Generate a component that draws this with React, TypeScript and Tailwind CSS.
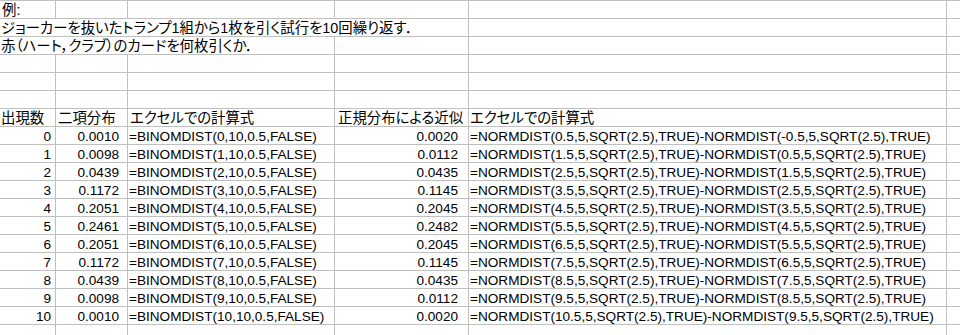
import React from "react";

const binom = ["0.0010", "0.0098", "0.0439", "0.1172", "0.2051", "0.2461", "0.2051", "0.1172", "0.0439", "0.0098", "0.0010"];
const normal = ["0.0020", "0.0112", "0.0435", "0.1145", "0.2045", "0.2482", "0.2045", "0.1145", "0.0435", "0.0112", "0.0020"];

const line = "border-[#c0c0c0]";

function Row({ children }: { children: React.ReactNode }) {
  return <div className={`flex h-[18px] border-b ${line}`}>{children}</div>;
}

function Tail() {
  return <div className="h-full flex-1 border-l border-[#c0c0c0]" />;
}

function Ja({ children }: { children: React.ReactNode }) {
  return <span className="text-[14.4px]">{children}</span>;
}

function Blank() {
  return (
    <Row>
      <div className={`w-[56px] h-full border-r ${line}`} />
      <div className={`w-[72px] h-full border-r ${line}`} />
      <div className={`w-[207px] h-full border-r ${line}`} />
      <div className={`w-[134px] h-full border-r ${line}`} />
      <div className="w-[477px] h-full" />
      <Tail />
    </Row>
  );
}

export default function App() {
  return (
    <div
      className={`w-[960px] h-[335px] overflow-hidden bg-white text-black text-[13.6px] leading-[15px] border-t ${line} [font-family:'Liberation_Sans','Noto_Sans_CJK_JP',sans-serif] [font-feature-settings:'palt']`}
    >
      {/* 例 */}
      <Row>
        <div className={`w-[56px] h-full border-r ${line} pl-[2px] flex items-end`}><Ja>例:</Ja></div>
        <div className={`w-[72px] h-full border-r ${line}`} />
        <div className={`w-[207px] h-full border-r ${line}`} />
        <div className={`w-[134px] h-full border-r ${line}`} />
        <div className="w-[477px] h-full" />
        <Tail />
      </Row>
      <Row>
        <div className={`w-[469px] h-full border-r ${line} pl-[1px] flex items-end whitespace-nowrap`}>
          <Ja>ジョーカーを抜いたトランプ1組から1枚を引く試行を10回繰り返す．</Ja>
        </div>
        <div className="w-[477px] h-full" />
        <Tail />
      </Row>
      <Row>
        <div className={`w-[335px] h-full border-r ${line} pl-[1px] flex items-end whitespace-nowrap`}>
          <Ja>赤（ハート，クラブ）のカードを何枚引くか．</Ja>
        </div>
        <div className={`w-[134px] h-full border-r ${line}`} />
        <div className="w-[477px] h-full" />
        <Tail />
      </Row>
      <Blank />
      <Blank />
      <Blank />

      {/* header */}
      <Row>
        <div className={`w-[56px] h-full border-r ${line} pl-[1px] flex items-end whitespace-nowrap`}><Ja>出現数</Ja></div>
        <div className={`w-[72px] h-full border-r ${line} pl-[2px] flex items-end whitespace-nowrap`}><Ja>二項分布</Ja></div>
        <div className={`w-[207px] h-full border-r ${line} pl-[2px] flex items-end whitespace-nowrap`}><Ja>エクセルでの計算式</Ja></div>
        <div className={`w-[134px] h-full border-r ${line} pl-[3px] flex items-end whitespace-nowrap`}><Ja>正規分布による近似</Ja></div>
        <div className="w-[477px] h-full pl-[1px] flex items-end whitespace-nowrap"><Ja>エクセルでの計算式</Ja></div>
        <Tail />
      </Row>

      {binom.map((b, k) => (
        <Row key={k}>
          <div className={`w-[56px] h-full border-r ${line} pr-[4px] flex items-end justify-end`}>{k}</div>
          <div className={`w-[72px] h-full border-r ${line} pr-[8px] flex items-end justify-end`}>{b}</div>
          <div className={`w-[207px] h-full border-r ${line} pl-[1px] flex items-end whitespace-nowrap`}>
            =BINOMDIST({k},10,0.5,FALSE)
          </div>
          <div className={`w-[134px] h-full border-r ${line} pr-[10px] flex items-end justify-end`}>{normal[k]}</div>
          <div className="w-[477px] h-full pl-[1px] flex items-end whitespace-nowrap">
            =NORMDIST({k + 0.5},5,SQRT(2.5),TRUE)-NORMDIST({k - 0.5},5,SQRT(2.5),TRUE)
          </div>
          <Tail />
        </Row>
      ))}
      <Blank />
    </div>
  );
}
